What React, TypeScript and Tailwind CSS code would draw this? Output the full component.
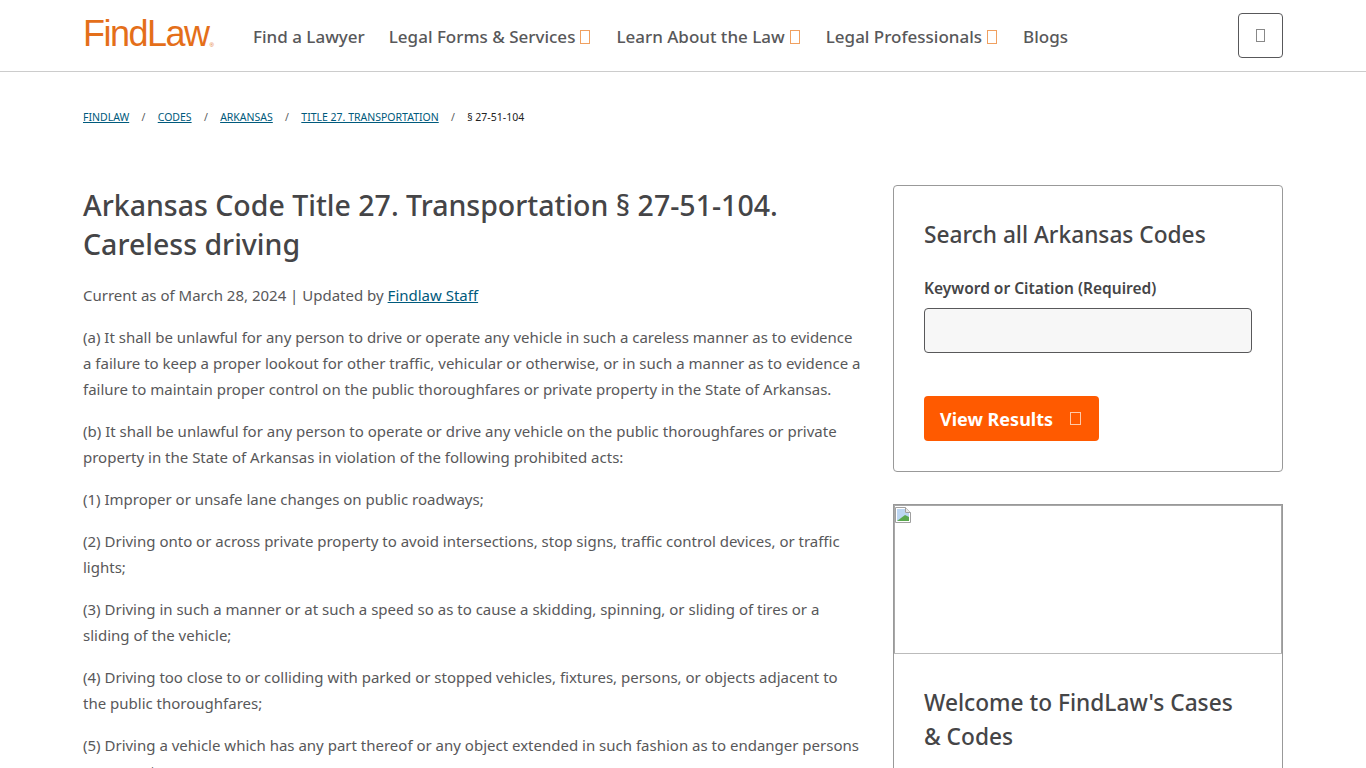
import React from "react";

const crumbs = ["FINDLAW", "CODES", "ARKANSAS", "TITLE 27. TRANSPORTATION"];

const paragraphs = [
  "(a) It shall be unlawful for any person to drive or operate any vehicle in such a careless manner as to evidence a failure to keep a proper lookout for other traffic, vehicular or otherwise, or in such a manner as to evidence a failure to maintain proper control on the public thoroughfares or private property in the State of Arkansas.",
  "(b) It shall be unlawful for any person to operate or drive any vehicle on the public thoroughfares or private property in the State of Arkansas in violation of the following prohibited acts:",
  "(1) Improper or unsafe lane changes on public roadways;",
  "(2) Driving onto or across private property to avoid intersections, stop signs, traffic control devices, or traffic lights;",
  "(3) Driving in such a manner or at such a speed so as to cause a skidding, spinning, or sliding of tires or a sliding of the vehicle;",
  "(4) Driving too close to or colliding with parked or stopped vehicles, fixtures, persons, or objects adjacent to the public thoroughfares;",
  "(5) Driving a vehicle which has any part thereof or any object extended in such fashion as to endanger persons or property;",
];

// missing icon font glyph
function Tofu({ className }: { className: string }) {
  return <span className={`inline-block border ${className}`}></span>;
}

function NavItem({ label, caret }: { label: string; caret?: boolean }) {
  return (
    <a className="flex items-center gap-[5px] text-[17px] font-medium text-[#58585a] whitespace-nowrap">
      {label}
      {caret && <Tofu className="w-[10px] h-[14px] mr-[2px] border-[#f0a060]" />}
    </a>
  );
}

function BrokenImage() {
  return (
    <svg width="16" height="16" viewBox="0 0 16 16" className="mt-px">
      <path d="M0.5 0.5H10.5L15.5 5.5V15.5H0.5Z" fill="#fff" stroke="#a0a0a0" />
      <path d="M10.5 0.5V5.5H15.5" fill="#e8e8e8" stroke="#a0a0a0" />
      <path d="M2 2H10V6H14V10L2 14Z" fill="#bcd6f2" />
      <path d="M2 14L10 8L14 10V14Z" fill="#5aa84e" />
    </svg>
  );
}

export default function App() {
  return (
    <div className="h-screen overflow-hidden bg-white text-[#58585a] font-['Noto_Sans','Open_Sans',sans-serif]">
      <header className="h-[72px] border-b border-[#cccccc]">
        <div className="w-[1200px] mx-auto h-full flex items-center">
          <div className="w-[170px] flex items-start text-[#e46f1a] font-['Liberation_Sans',sans-serif] text-[36px] tracking-[-1.5px] leading-none -mt-[3px]">
            FindLaw
            <span className="text-[6px] tracking-normal mt-[26px] ml-[1px]">®</span>
          </div>
          <nav className="flex items-center gap-[24px] mt-[2px]">
            <NavItem label="Find a Lawyer" />
            <NavItem label="Legal Forms & Services" caret />
            <NavItem label="Learn About the Law" caret />
            <NavItem label="Legal Professionals" caret />
            <NavItem label="Blogs" />
          </nav>
          <button className="ml-auto w-[45px] h-[45px] -mt-[1px] rounded-[4px] border border-[#58585a] flex items-center justify-center">
            <Tofu className="w-[9px] h-[13px] border-[#888888]" />
          </button>
        </div>
      </header>

      <div className="w-[1200px] mx-auto">
        <nav className="flex items-center h-[18px] mt-[37px] text-[10.5px]">
          {crumbs.map((c) => (
            <React.Fragment key={c}>
              <a className="text-[#005a7c] underline whitespace-nowrap">{c}</a>
              <span className="w-[28.5px] shrink-0 text-center text-[#58585a]">/</span>
            </React.Fragment>
          ))}
          <span className="text-[#222222]">§ 27-51-104</span>
        </nav>

        <div className="flex justify-between mt-[58px]">
          <main className="w-[780px] pt-[1px]">
            <h1 className="text-[28.5px] leading-[39px] font-medium text-[#454547]">
              Arkansas Code Title 27. Transportation § 27-51-104. Careless driving
            </h1>
            <p className="mt-[18px] text-[15px] leading-[26px]">
              Current as of March 28, 2024 | Updated by{" "}
              <a className="text-[#005a7c] underline">Findlaw Staff</a>
            </p>
            {paragraphs.map((p) => (
              <p key={p} className="mt-[16px] text-[15px] leading-[26px]">
                {p}
              </p>
            ))}
          </main>

          <aside className="w-[390px] shrink-0">
            <div className="h-[287px] border border-[#999999] rounded-[4px] px-[30px] pt-[31px]">
              <h2 className="text-[22.7px] leading-[36px] font-medium text-[#454547]">Search all Arkansas Codes</h2>
              <label className="block mt-[23px] text-[15.5px] leading-[24px] font-semibold text-[#454547]">
                Keyword or Citation (Required)
              </label>
              <input className="block mt-[8px] w-full h-[45px] bg-[#f7f7f7] border border-[#58585a] rounded-[4px]" />
              <button className="mt-[43px] h-[45px] w-[175px] bg-[#ff5a00] rounded-[4px] text-white text-[18px] font-bold flex items-center pl-[16px] pt-[1px]">
                View Results
                <Tofu className="ml-[17px] w-[11px] h-[13px] -mt-[1px] border-[#ffc9a8]" />
              </button>
            </div>

            <div className="mt-[32px] border border-[#999999]">
              <div className="h-[149px] border-b border-[#bbbbbb]">
                <div className="h-full border-t border-x border-[#a8a8a8]">
                  <BrokenImage />
                </div>
              </div>
              <div className="px-[30px] pt-[32px] pb-[30px]">
                <h2 className="text-[22.7px] leading-[34px] font-medium text-[#454547]">
                  Welcome to FindLaw's Cases &amp; Codes
                </h2>
              </div>
            </div>
          </aside>
        </div>
      </div>
    </div>
  );
}
